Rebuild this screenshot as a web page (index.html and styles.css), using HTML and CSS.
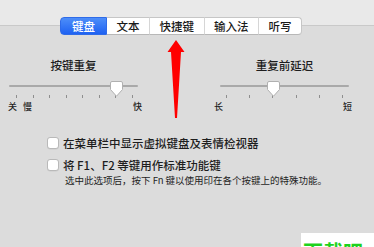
FILE: index.html
```html
<!DOCTYPE html>
<html lang="zh-CN">
<head>
<meta charset="utf-8">
<link rel="stylesheet" href="styles.css">
</head>
<body>
<div class="page">
  <div class="tabs">
    <div class="tab tab-first selected">键盘</div>
    <div class="tab">文本</div>
    <div class="tab">快捷键</div>
    <div class="tab">输入法</div>
    <div class="tab tab-last">听写</div>
  </div>

  <div class="sliders">
    <div class="slider slider-repeat">
      <div class="slider-title">按键重复</div>
      <div class="track">
        <svg class="thumb" style="left:101px" width="13" height="16" viewBox="0 0 13 16"><path d="M2 0.5 H11 Q12.5 0.5 12.5 2 V8.5 L6.5 15.2 L0.5 8.5 V2 Q0.5 0.5 2 0.5 Z" fill="#ffffff" stroke="#b0b0b0" stroke-width="1"/></svg>
      </div>
      <div class="ticks">
        <i></i><i></i><i></i><i></i><i></i><i></i><i></i><i></i>
      </div>
      <div class="ends">
        <span>关</span><span class="slow">慢</span><span class="right">快</span>
      </div>
    </div>
    <div class="slider slider-delay">
      <div class="slider-title">重复前延迟</div>
      <div class="track">
        <svg class="thumb" style="left:47px" width="13" height="16" viewBox="0 0 13 16"><path d="M2 0.5 H11 Q12.5 0.5 12.5 2 V8.5 L6.5 15.2 L0.5 8.5 V2 Q0.5 0.5 2 0.5 Z" fill="#ffffff" stroke="#b0b0b0" stroke-width="1"/></svg>
      </div>
      <div class="ticks">
        <i></i><i></i><i></i><i></i><i></i><i></i>
      </div>
      <div class="ends">
        <span>长</span><span class="right">短</span>
      </div>
    </div>
  </div>

  <div class="options">
    <div class="option">
      <span class="box"></span>
      <span class="option-text">在菜单栏中显示虚拟键盘及表情检视器</span>
    </div>
    <div class="option option-second">
      <span class="box"></span>
      <span class="option-text">将 F1、F2 等键用作标准功能键</span>
    </div>
    <div class="hint">选中此选项后，按下 Fn 键以使用印在各个按键上的特殊功能。</div>
  </div>

  <svg class="arrow" width="20" height="82" viewBox="0 0 20 82"><path d="M10 0 L18.5 12 L15 12 L11 78 L9 78 L5 12 L1.5 12 Z" fill="#ff0000"/></svg>

  <div class="watermark">下载吧</div>
</div>
</body>
</html>
```

FILE: styles.css
```css
html, body {
  margin: 0;
  padding: 0;
}
body {
  width: 374px;
  height: 247px;
  overflow: hidden;
  font-family: "Noto Sans CJK SC", "Noto Sans", sans-serif;
  color: #1e1e1e;
  background: linear-gradient(#e9e9e9 0, #e9e9e9 25px, #c9c9c9 25px, #c9c9c9 26px, #dcdcdc 26px);
}
.page {
  position: relative;
  width: 374px;
  height: 247px;
}
.tabs {
  display: flex;
  margin-left: 60px;
  padding-top: 17px;
  height: 18px;
}
.tab {
  height: 16px;
  line-height: 16px;
  padding: 0 9.5px;
  font-size: 11.5px;
  font-weight: 500;
  background: #ffffff;
  border-top: 1px solid #c6c6c6;
  border-bottom: 1px solid #b8b8b8;
  border-right: 1px solid #d6d6d6;
  color: #1a1a1a;
}
.tab-first {
  padding: 0 11px;
  border-radius: 4px 0 0 4px;
  border-left: 1px solid #c6c6c6;
}
.tab-last {
  border-radius: 0 4px 4px 0;
  border-right: 1px solid #c6c6c6;
}
.selected {
  background: linear-gradient(#4d8ef9, #1f62f2);
  color: #ffffff;
  border-color: #2f6be8;
}
.sliders {
  display: flex;
  margin-top: 23px;
}
.slider {
  display: flex;
  flex-direction: column;
}
.slider-repeat {
  margin-left: 8px;
  width: 134px;
}
.slider-delay {
  margin-left: 72px;
  width: 138px;
}
.slider-title {
  text-align: center;
  font-size: 11.5px;
  font-weight: 500;
  line-height: 14px;
  height: 14px;
}
.slider-repeat .slider-title {
  padding-right: 3px;
}
.slider-delay .slider-title {
  padding-left: 3px;
}
.track {
  position: relative;
  margin-top: 13px;
  width: 129px;
  height: 2px;
  border-radius: 1px;
  background: #a9a9a9;
}
.slider-repeat .track {
  margin-left: 1px;
}
.slider-delay .track {
  margin-left: 6px;
}
.thumb {
  position: absolute;
  top: -4px;
  display: block;
}
.ticks {
  display: flex;
  justify-content: space-between;
  width: 117px;
  height: 3px;
  margin-top: 8px;
}
.slider-repeat .ticks {
  margin-left: 8px;
}
.slider-delay .ticks {
  margin-left: 12px;
}
.ticks i {
  display: block;
  width: 1px;
  height: 3px;
  background: #8e8e8e;
}
.ends {
  display: flex;
  margin-top: 4px;
  font-size: 9px;
  font-weight: 500;
  line-height: 10px;
  height: 10px;
}
.slow {
  margin-left: 6px;
}
.right {
  margin-left: auto;
}
.options {
  display: flex;
  flex-direction: column;
  margin-top: 24px;
  margin-left: 47px;
}
.option {
  display: flex;
  align-items: center;
  height: 14px;
}
.option-second {
  margin-top: 8px;
}
.box {
  width: 10px;
  height: 10px;
  background: #ffffff;
  border: 1px solid #b9b9b9;
  border-radius: 3px;
  box-shadow: 0 0.5px 0.5px rgba(0, 0, 0, 0.08);
}
.option-text {
  margin-left: 4px;
  font-size: 11.5px;
  font-weight: 500;
  line-height: 14px;
}
.hint {
  margin-top: 2px;
  margin-left: 18px;
  font-size: 9.5px;
  line-height: 12px;
}
.arrow {
  position: absolute;
  left: 166px;
  top: 40px;
}
.watermark {
  position: absolute;
  left: 301px;
  top: 233px;
  width: 73px;
  height: 14px;
  overflow: hidden;
  background: #ffffff;
  box-sizing: border-box;
  padding: 9px 0 0 2px;
  color: #1ed21e;
  font-size: 20px;
  font-weight: bold;
  line-height: 20px;
  white-space: nowrap;
}
```
